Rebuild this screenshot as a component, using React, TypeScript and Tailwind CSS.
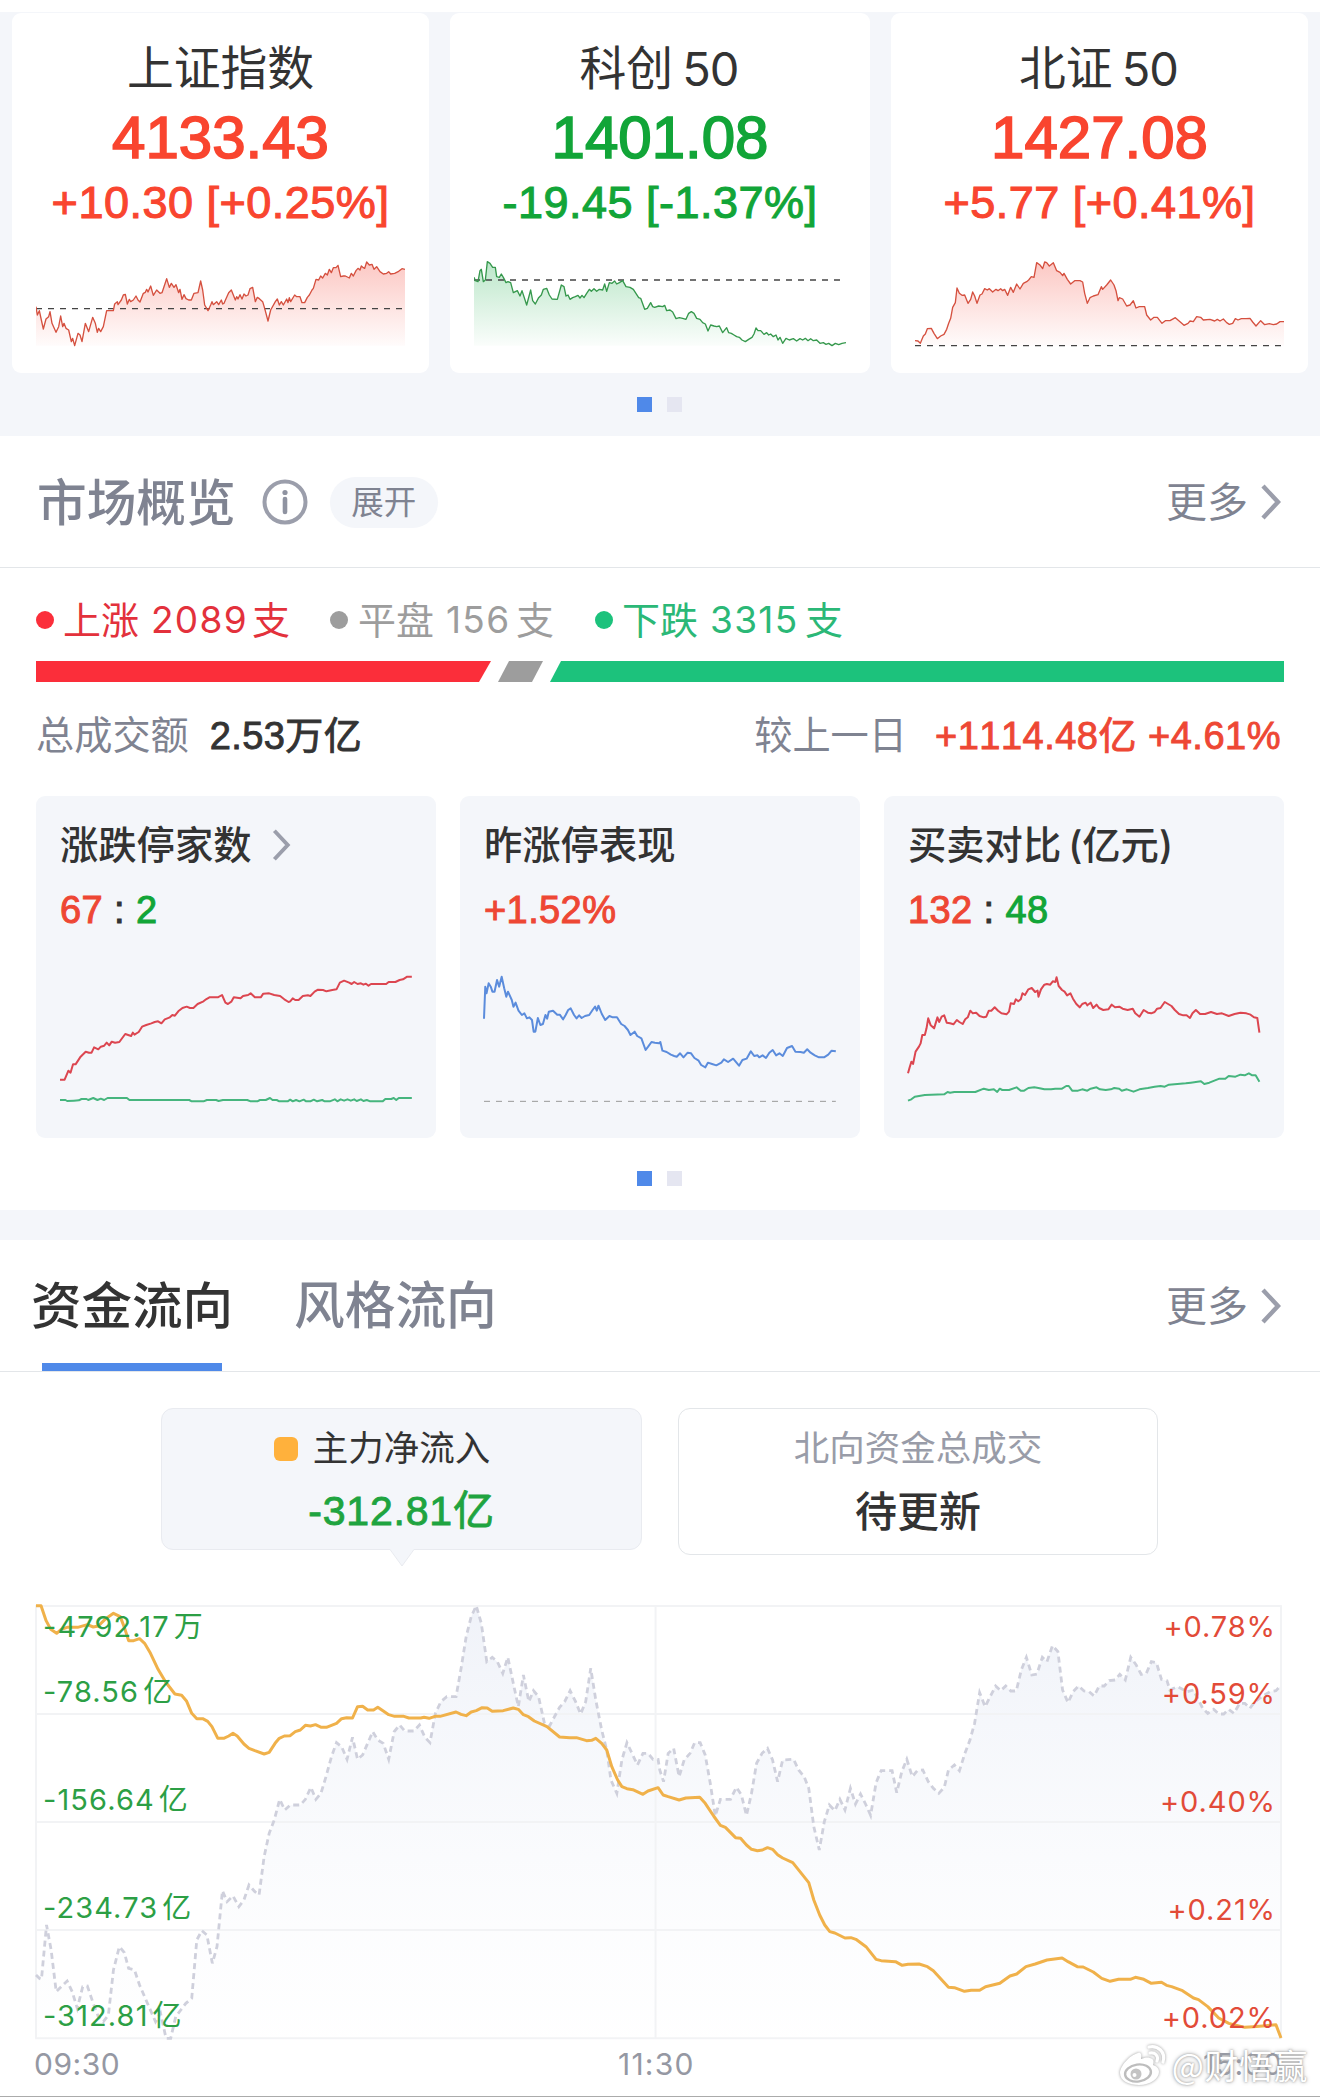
import React from 'react';

const INDEX_SH =
  '108,920 112,945 118,932 124,960 130,987 138,957 146,950 150,935 156,970 168,997 176,980 182,948 188,980 192,970 198,985 206,990 214,1025 218,1015 224,1037 234,1000 240,1005 246,1025 256,970 266,995 278,952 286,970 292,997 296,985 302,995 310,980 320,932 340,932 344,912 352,905 354,914 364,900 370,885 376,883 382,912 388,898 392,905 400,900 408,888 414,900 420,906 430,880 436,877 440,868 444,876 452,858 460,886 470,870 480,880 486,878 500,836 508,862 514,850 522,862 528,854 536,878 540,868 546,898 552,884 558,896 566,900 574,900 582,880 594,878 602,843 608,870 614,915 624,932 632,915 636,905 640,914 650,905 656,914 664,900 668,912 672,910 686,878 694,870 706,900 710,890 714,897 720,884 726,897 732,882 738,888 744,885 750,866 758,862 766,905 772,892 778,896 788,905 794,925 804,963 812,930 826,905 832,897 838,915 844,905 850,915 860,897 864,908 868,893 872,905 884,885 890,890 900,890 906,908 914,908 922,892 928,885 936,870 940,865 948,838 956,840 962,828 968,834 976,820 982,825 988,808 994,818 1000,803 1008,803 1014,796 1022,830 1030,828 1036,828 1048,834 1054,820 1060,828 1068,812 1074,805 1080,810 1084,798 1090,803 1094,805 1100,786 1108,795 1116,793 1122,808 1130,800 1140,815 1150,822 1160,820 1166,815 1172,822 1184,820 1196,814 1206,806 1215,808';
const INDEX_KC =
  '102,832 106,842 114,845 120,812 124,808 130,845 136,840 142,785 150,790 158,802 166,802 170,830 178,832 184,822 190,832 198,848 204,845 212,848 220,878 232,872 240,888 246,872 260,915 272,870 278,902 286,912 296,893 304,885 310,868 320,865 328,885 336,897 352,898 364,855 372,860 378,888 384,885 390,898 398,893 406,890 414,886 420,894 426,886 432,893 440,880 448,868 454,874 462,866 470,874 478,868 488,870 494,852 500,874 508,848 516,850 524,843 530,852 538,848 548,842 558,860 570,862 580,868 596,893 602,895 614,928 622,925 632,908 638,920 644,922 656,918 668,920 674,916 680,932 690,930 698,936 708,956 718,953 728,955 738,958 746,940 754,935 762,940 770,955 780,958 788,968 796,972 804,993 812,975 822,978 830,980 838,978 848,998 860,983 866,998 874,1000 882,1005 890,1010 898,1012 906,1020 916,1025 926,1018 936,1012 942,1002 948,984 954,992 962,992 972,1003 980,998 986,1005 992,1002 1000,1010 1008,1005 1014,1020 1020,1012 1028,1030 1038,1015 1048,1020 1060,1016 1070,1023 1080,1016 1088,1020 1096,1015 1104,1022 1112,1016 1120,1022 1130,1020 1140,1030 1150,1028 1158,1033 1166,1030 1176,1037 1186,1030 1196,1034 1206,1030 1218,1028';
const INDEX_BZ =
  '105,1022 114,1023 121,1030 130,1008 136,1002 142,986 154,985 162,1000 172,1016 182,1008 192,1003 200,988 206,970 212,955 218,922 226,908 231,864 238,880 246,886 254,885 264,910 272,898 278,876 284,888 291,910 300,885 306,882 314,866 322,870 328,866 338,876 348,868 354,872 362,866 368,872 374,868 383,886 392,862 400,877 410,852 420,867 430,850 440,845 446,840 454,830 462,832 470,788 480,795 488,806 494,786 500,788 508,798 520,788 530,812 540,817 548,827 552,820 562,838 572,852 584,842 600,842 608,846 614,880 622,910 630,893 640,888 654,884 664,860 668,868 680,855 692,840 702,855 708,872 714,902 718,893 728,897 740,918 750,915 760,902 768,924 778,920 794,920 800,945 812,960 822,952 832,952 846,970 856,962 870,962 886,953 900,965 912,976 924,970 930,963 940,965 950,950 962,952 970,960 990,958 1004,963 1012,958 1020,963 1030,957 1040,968 1048,973 1058,970 1066,956 1074,960 1084,956 1098,956 1110,955 1118,966 1128,978 1142,962 1154,974 1168,971 1180,974 1190,972 1200,965 1212,965';

const LIMIT_UP =
  '143,899 154,899 163,872 168,878 174,853 180,853 192,830 204,815 212,818 218,818 224,802 234,808 240,800 248,797 254,788 260,796 266,785 274,788 284,786 298,762 312,768 316,758 320,764 330,756 338,740 348,735 360,730 368,726 376,724 384,730 392,718 404,712 410,705 416,707 424,694 434,684 444,680 452,684 460,684 470,672 484,664 490,658 498,652 518,652 528,645 536,668 542,672 550,665 556,652 572,655 578,648 590,645 596,640 606,652 620,652 626,641 640,640 652,645 666,648 676,658 686,666 690,664 696,655 702,660 710,660 720,648 732,646 738,648 748,635 756,629 768,630 776,634 790,630 800,628 808,608 818,602 830,608 836,612 842,606 850,612 858,610 864,614 870,611 876,617 882,612 910,612 918,612 924,606 940,606 950,600 958,598 968,590 979,590';
const LIMIT_DOWN =
  '143,960 156,960 160,963 176,962 188,961 194,957 206,957 210,960 222,954 232,960 240,956 248,960 256,954 302,954 308,960 450,960 456,964 484,964 492,960 514,960 520,963 530,960 588,960 596,964 612,964 618,960 632,960 642,954 648,960 658,960 664,964 684,964 690,959 696,964 704,960 712,964 722,959 728,964 738,964 746,959 754,964 766,960 772,964 784,964 796,958 802,964 810,958 818,962 826,958 834,962 842,958 848,963 858,958 864,963 872,960 880,964 910,964 916,957 930,957 936,954 942,960 948,954 979,954';
const YESTERDAY =
  '1150,716 1153,620 1156,640 1161,610 1166,620 1170,635 1175,635 1181,600 1186,620 1192,590 1198,625 1203,650 1207,635 1216,660 1220,680 1225,668 1232,692 1240,705 1246,700 1252,715 1258,712 1264,720 1268,755 1272,755 1278,714 1284,735 1290,732 1296,705 1300,716 1304,695 1314,692 1324,704 1330,704 1338,718 1344,705 1350,690 1356,685 1364,705 1370,715 1376,706 1382,714 1390,708 1400,705 1408,690 1414,680 1418,692 1422,677 1430,702 1438,720 1448,708 1456,712 1466,712 1476,732 1484,738 1492,750 1498,765 1508,755 1514,768 1524,775 1534,810 1540,800 1548,786 1556,788 1566,790 1569,786 1574,812 1584,816 1594,824 1602,828 1608,830 1616,820 1624,832 1634,818 1642,820 1650,834 1660,842 1666,855 1676,862 1682,848 1692,852 1702,856 1714,848 1720,838 1730,846 1742,836 1750,848 1756,857 1764,840 1774,836 1784,814 1792,828 1800,826 1804,832 1812,826 1820,834 1828,818 1836,810 1844,826 1852,820 1860,828 1870,804 1882,798 1890,815 1902,816 1910,818 1918,808 1926,818 1936,826 1946,832 1958,832 1968,824 1976,812 1986,814';
const BUY =
  '590,880 594,862 598,845 602,852 608,815 616,800 620,790 624,765 630,765 634,745 638,715 644,736 652,745 660,712 664,726 670,710 676,706 682,728 690,730 698,733 706,720 712,726 720,732 726,718 732,712 738,692 744,700 752,698 760,708 770,712 776,710 782,692 788,692 796,682 804,692 812,700 824,703 830,695 834,670 842,672 846,658 852,664 858,658 862,640 868,645 876,628 884,624 892,636 898,632 900,650 906,628 914,614 920,612 928,614 934,604 940,606 943,592 948,618 956,630 962,635 968,646 976,640 982,656 990,672 998,682 1004,672 1012,668 1016,676 1024,668 1030,684 1038,674 1044,684 1054,690 1066,688 1074,674 1082,682 1092,680 1100,686 1112,690 1124,686 1130,700 1140,710 1150,690 1160,698 1168,700 1176,696 1182,686 1190,684 1200,666 1208,672 1216,678 1224,690 1234,702 1244,706 1252,706 1260,714 1266,700 1274,690 1284,702 1296,702 1310,696 1324,702 1336,700 1352,708 1366,702 1380,698 1394,700 1404,704 1412,712 1420,714 1425,758';
const SELL =
  '590,962 598,958 606,950 630,945 676,943 684,936 690,938 700,936 720,936 750,936 770,926 782,930 794,928 802,936 808,926 814,930 830,930 848,922 858,932 866,932 876,924 890,922 900,924 914,928 930,928 940,926 956,926 966,918 972,918 980,932 994,932 1004,928 1016,932 1024,926 1038,922 1046,928 1060,930 1072,928 1080,924 1092,926 1098,932 1110,928 1126,935 1140,928 1160,924 1176,920 1190,918 1200,920 1210,914 1230,912 1250,910 1262,908 1286,904 1294,912 1306,908 1318,902 1330,896 1344,896 1352,888 1368,890 1380,884 1390,886 1400,880 1408,886 1416,886 1425,905';

const FLOW =
  '86,77 98,77 110,122 121,148 135,160 146,148 160,142 185,142 208,134 222,141 234,138 250,118 270,100 286,110 296,142 306,182 318,182 332,176 344,190 358,220 376,268 394,306 416,342 432,346 444,364 456,400 468,416 482,416 494,424 504,440 518,475 532,475 544,468 554,460 564,468 580,492 592,505 606,512 628,522 640,517 654,490 664,475 676,468 690,467 702,455 714,450 726,436 738,438 750,434 764,442 776,442 800,430 812,416 824,413 838,414 850,380 862,379 874,390 888,390 898,382 912,394 924,404 938,409 960,409 972,414 1000,414 1008,412 1020,415 1034,409 1046,409 1084,396 1096,403 1108,407 1120,396 1132,392 1146,383 1158,384 1170,394 1196,392 1220,384 1232,388 1244,404 1256,410 1270,423 1300,440 1330,471 1354,473 1370,473 1394,482 1406,481 1416,475 1430,490 1442,510 1454,560 1468,600 1478,620 1490,626 1504,629 1528,643 1540,633 1564,623 1576,645 1588,650 1614,660 1630,654 1663,652 1676,670 1696,708 1712,736 1724,742 1748,773 1760,775 1774,795 1786,808 1800,812 1812,810 1824,803 1836,808 1848,824 1860,834 1884,848 1922,908 1934,960 1948,1005 1960,1035 1972,1055 1984,1059 2008,1074 2022,1073 2034,1078 2058,1100 2082,1138 2094,1142 2128,1145 2144,1156 2158,1153 2184,1152 2204,1160 2218,1172 2254,1222 2268,1223 2292,1234 2308,1231 2328,1231 2342,1220 2376,1210 2400,1188 2416,1182 2438,1160 2460,1152 2488,1140 2524,1134 2538,1145 2560,1160 2574,1161 2598,1176 2618,1195 2638,1204 2658,1198 2686,1198 2698,1192 2718,1198 2736,1210 2760,1207 2772,1216 2784,1220 2810,1232 2836,1254 2848,1259 2870,1280 2896,1314 2920,1330 2958,1342 2978,1340 3008,1337 3032,1334 3044,1374';
const TREND =
  '86,1185 94,1195 99,1198 111,1035 122,1110 134,1235 146,1220 160,1203 172,1235 184,1285 197,1220 208,1218 222,1270 234,1310 246,1325 258,1305 270,1170 284,1100 296,1118 306,1165 320,1170 332,1215 356,1285 370,1325 382,1300 395,1375 406,1375 418,1310 430,1290 442,1270 456,1255 468,1080 480,1052 492,1065 505,1150 516,1100 529,932 540,965 554,948 568,980 580,960 592,915 606,935 616,945 628,830 640,760 652,720 665,658 677,690 690,675 714,675 726,658 739,622 751,658 763,640 775,590 788,530 800,488 812,500 825,538 838,472 850,538 862,525 886,455 898,480 911,490 924,538 937,455 950,435 962,453 984,453 997,435 1010,472 1022,488 1035,400 1048,365 1062,350 1084,350 1096,265 1108,170 1120,110 1132,77 1144,130 1157,245 1170,232 1182,245 1195,280 1207,232 1220,310 1232,380 1244,285 1257,365 1268,332 1280,350 1294,430 1306,438 1320,405 1330,382 1342,365 1355,332 1368,365 1380,402 1392,365 1404,265 1416,360 1430,450 1442,510 1452,600 1466,640 1478,540 1490,488 1502,520 1515,555 1528,520 1540,520 1552,538 1564,538 1568,570 1577,605 1588,520 1601,505 1614,590 1626,540 1640,520 1651,488 1664,488 1676,525 1688,610 1700,708 1712,658 1736,658 1750,622 1762,645 1774,706 1786,640 1798,550 1811,520 1824,505 1836,540 1848,605 1860,540 1886,538 1898,570 1911,590 1922,625 1934,740 1947,810 1959,725 1971,675 1984,692 1996,658 2008,690 2021,625 2033,672 2045,642 2058,675 2069,706 2082,608 2094,572 2120,572 2131,638 2143,575 2155,538 2168,590 2180,572 2193,570 2206,605 2218,625 2231,640 2244,622 2254,570 2268,555 2280,572 2293,520 2305,480 2316,430 2328,338 2341,380 2353,350 2366,318 2378,332 2390,318 2402,333 2415,333 2427,270 2439,232 2452,285 2464,282 2477,232 2488,245 2501,197 2514,215 2525,330 2538,368 2550,335 2563,318 2576,333 2588,335 2600,348 2612,318 2624,318 2636,302 2650,300 2661,283 2674,300 2687,232 2700,255 2712,283 2724,280 2736,245 2748,248 2760,298 2773,302 2780,330 2798,320 2822,335 2836,330 2858,385 2870,400 2884,388 2896,402 2908,402 2920,388 2932,400 2946,370 2958,370 2970,385 2982,365 2998,350 3018,335 3032,332 3043,318';

type IndexCardProps = {
  name: string;
  digits?: string;
  value: string;
  change: string;
  tone: string;
  stroke: string;
  fill: string;
  id: string;
  points: string;
  x0: number;
  x1: number;
  baseline: number;
};

function IndexCard({ name, digits, value, change, tone, stroke, fill, id, points, x0, x1, baseline }: IndexCardProps) {
  return (
    <div className="flex h-[360px] flex-col items-center rounded-[9px] bg-white pt-[25px]">
      <div className="flex h-[60px] items-center text-[46.800px] leading-[60px] text-[#333333]">
        <span>{name}</span>
        {digits && <span className="ml-[9px] mr-[2px] mt-[2px] text-[47px] tracking-[-1px]">{digits}</span>}
      </div>
      <div className={`h-[80px] whitespace-nowrap font-["Liberation_Sans",sans-serif] text-[60px] leading-[80px] [font-kerning:none] [-webkit-text-stroke:1.7px_currentColor] ${tone}`}>
        {value}
      </div>
      <div className={`h-[50px] whitespace-pre font-["Liberation_Sans",sans-serif] text-[45px] leading-[50px] tracking-[0.5px] [font-kerning:none] [-webkit-text-stroke:1.1px_currentColor] ${tone}`}>
        {change}
      </div>
      <svg
        className="mt-[29px] block"
        width={(x1 - x0) / 3}
        height={93}
        viewBox={`${x0} 771 ${x1 - x0} 279`}
      >
        <defs>
          <linearGradient id={id} x1="0" y1="0" x2="0" y2="1">
            <stop offset="0" stopColor={fill} stopOpacity="0.3" />
            <stop offset="1" stopColor={fill} stopOpacity="0.02" />
          </linearGradient>
        </defs>
        <polygon points={`${x0},1037 ${points} ${x1},1037`} fill={`url(#${id})`} />
        <line x1={x0} x2={x1} y1={baseline} y2={baseline} stroke="#444" strokeWidth="4" strokeDasharray="18 18" />
        <polyline points={points} fill="none" stroke={stroke} strokeWidth="4" strokeLinejoin="round" />
      </svg>
    </div>
  );
}

function Dots() {
  return (
    <div className="flex justify-center gap-[15px] pr-[2px]">
      <span className="size-[15px] bg-[#4f89e9]" />
      <span className="size-[15px] bg-[#e5e6f1]" />
    </div>
  );
}

function Chevron({ w = 20, h = 36 }: { w?: number; h?: number }) {
  return (
    <svg width={w} height={h} viewBox="0 0 20 36" className="block shrink-0" fill="none" stroke="#9b9eab" strokeWidth="4.4">
      <path d="M2 2 L17 18 L2 34" strokeLinejoin="miter" />
    </svg>
  );
}

function More() {
  return (
    <div className="flex items-center">
      <span className="text-[41px] leading-[50px] text-[#7f8391]">更多</span>
      <span className="ml-[13px]">
        <Chevron />
      </span>
    </div>
  );
}

function StatCard({ title, chevron, value, children }: { title: React.ReactNode; chevron?: boolean; value: React.ReactNode; children: React.ReactNode }) {
  return (
    <div className="h-[342px] rounded-[9px] bg-[#f4f6fa] pl-[24px] pt-[24px]">
      <div className="flex h-[50px] items-center">
        <span className="whitespace-nowrap text-[38.300px] font-medium leading-[50px] text-[#333333]">{title}</span>
        {chevron && (
          <span className="ml-[20px]">
            <Chevron w={19} h={32} />
          </span>
        )}
      </div>
      <div className='mt-[15px] h-[50px] whitespace-pre font-["Liberation_Sans",sans-serif] text-[38px] leading-[50px] tracking-[0.4px] [font-kerning:none] [-webkit-text-stroke:1px_currentColor]'>
        {value}
      </div>
      {children}
    </div>
  );
}

function MiniChart({ x0, children }: { x0: number; children: React.ReactNode }) {
  return (
    <svg className="mt-[70px] block" width={352} height={100} viewBox={`${x0} 675 836.4 300`} preserveAspectRatio="none" overflow="visible">
      {children}
    </svg>
  );
}

function Line({ points, color, width = 2 }: { points: string; color: string; width?: number }) {
  return (
    <polyline points={points} fill="none" stroke={color} strokeWidth={width} strokeLinejoin="round" vectorEffect="non-scaling-stroke" />
  );
}

const LEFT_LABELS = [
  ['-4792.17', '万'],
  ['-78.56', '亿'],
  ['-156.64', '亿'],
  ['-234.73', '亿'],
  ['-312.81', '亿'],
];
const RIGHT_LABELS = ['+0.78%', '+0.59%', '+0.40%', '+0.21%', '+0.02%'];
const LEFT_TOPS = ['top-[2px]', 'top-[67px]', 'top-[175px]', 'top-[283px]', 'top-[391px]'];
const RIGHT_TOPS = ['top-[2px]', 'top-[69px]', 'top-[177px]', 'top-[285px]', 'top-[393px]'];

function FlowChart() {
  return (
    <div className="relative ml-[36px] h-[434px] w-[1245px]">
      <svg className="block" width={1245} height={434} viewBox="86 75 2958 1302" preserveAspectRatio="none" overflow="visible">
        <defs>
          <linearGradient id="trend" x1="0" y1="0" x2="0" y2="1">
            <stop offset="0" stopColor="#eef1f8" stopOpacity="0.9" />
            <stop offset="1" stopColor="#f6f8fc" stopOpacity="0.05" />
          </linearGradient>
        </defs>
        <polygon points={`86,1375 ${TREND} 3043,1375`} fill="url(#trend)" />
        {[78, 402, 726, 1050, 1375].map((y) => (
          <line key={y} x1="84" x2="3046" y1={y} y2={y} stroke="#f2f3f5" strokeWidth="2" vectorEffect="non-scaling-stroke" />
        ))}
        {[86, 1558, 3044].map((x) => (
          <line key={x} x1={x} x2={x} y1="78" y2="1375" stroke="#f2f3f5" strokeWidth="2" vectorEffect="non-scaling-stroke" />
        ))}
        <polyline points={TREND} fill="none" stroke="#cfd0dc" strokeWidth="2.8" strokeDasharray="6 4" vectorEffect="non-scaling-stroke" />
        <Line points={FLOW} color="#f0b14a" width={3} />
      </svg>
      {LEFT_LABELS.map(([n, u], i) => (
        <div key={n} className={`absolute left-[7px] flex h-[40px] items-center text-[29px] leading-[40px] text-[#2c9f45] ${LEFT_TOPS[i]}`}>
          <span className="tracking-[1.1px]">{n}</span>
          <span className="ml-[4px]">{u}</span>
        </div>
      ))}
      {RIGHT_LABELS.map((n, i) => (
        <div key={n} className={`absolute right-[5px] h-[40px] text-[29px] leading-[40px] tracking-[0.9px] text-[#e24b38] ${RIGHT_TOPS[i]}`}>
          {n}
        </div>
      ))}
    </div>
  );
}

function Watermark() {
  return (
    <div className="absolute right-[12px] top-[4px] flex items-center">
      <svg width="50" height="44" viewBox="0 0 50 44" className="mr-[4px] block [filter:drop-shadow(0_0_1.5px_#999)]" fill="none">
        <path
          d="M20 10c-8 2-18 13-18 20 0 8 9 12 19 12 12 0 20-7 20-13 0-4-3-6-6-7 1-3 1-6-3-7-3-1-6 0-9 1 1-4 0-7-3-6z"
          fill="#ffffff"
        />
        <ellipse cx="20" cy="30" rx="13" ry="8.500" fill="#fff" stroke="#bdbdbd" strokeWidth="2.400" transform="rotate(-8 20 30)" />
        <circle cx="18" cy="31" r="5.500" fill="#c4c4c4" />
        <circle cx="16.500" cy="32" r="2" fill="#fff" />
        <path d="M31 4c9-2 17 5 14 15M32 10c5-1 9 3 7 8" stroke="#ffffff" strokeWidth="3.200" strokeLinecap="round" />
      </svg>
      <span className='whitespace-nowrap font-["Noto_Sans_CJK_SC",sans-serif] text-[34px] leading-[44px] text-white [text-shadow:0_0_2px_#999,0_0_4px_#aaa]'>
        @财悟赢
      </span>
    </div>
  );
}

export default function App() {
  return (
    <div className='h-[2097px] w-[1320px] overflow-hidden bg-white pt-[12px] font-["Inter","Noto_Sans_CJK_SC",sans-serif]'>
      <section className="h-[424px] bg-[#f4f6fa] px-[12px] pt-px">
        <div className="grid grid-cols-[417px_420px_417px] gap-[21px]">
          <IndexCard name="上证指数" value="4133.43" change="+10.30 [+0.25%]" tone="text-[#f9452f]" stroke="#d5503f" fill="#f5483a" id="g1" points={INDEX_SH} x0={108} x1={1215} baseline={926} />
          <IndexCard name="科创" digits="50" value="1401.08" change="-19.45 [-1.37%]" tone="text-[#12a538]" stroke="#35984c" fill="#1fae4c" id="g2" points={INDEX_KC} x0={102} x1={1218} baseline={840} />
          <IndexCard name="北证" digits="50" value="1427.08" change="+5.77 [+0.41%]" tone="text-[#f9452f]" stroke="#d5503f" fill="#f5483a" id="g3" points={INDEX_BZ} x0={105} x1={1212} baseline={1037} />
        </div>
        <div className="mt-[24px]">
          <Dots />
        </div>
      </section>

      <section className="h-[774px]">
        <header className="flex h-[132px] items-center border-b border-[#e3e6e9] pl-[37px] pr-[39px]">
          <h2 className="mt-[2px] text-[49.700px] font-medium leading-[60px] text-[#7f8391]">市场概览</h2>
          <svg className="ml-[26px] block" width="46" height="46" viewBox="0 0 46 46">
            <circle cx="23" cy="23" r="20.500" fill="none" stroke="#9b9eab" strokeWidth="4" />
            <circle cx="23" cy="13.500" r="2.600" fill="#8f93a1" />
            <path d="M23 20v13" stroke="#8f93a1" strokeWidth="4.600" strokeLinecap="round" />
          </svg>
          <span className="ml-[22px] mt-px flex h-[51px] w-[108px] items-center justify-center rounded-full bg-[#f4f6fa] text-[32.500px] leading-[51px] text-[#7f8391]">
            展开
          </span>
          <span className="ml-auto">
            <More />
          </span>
        </header>

        <div className="flex h-[56px] w-full items-center pl-[36px] pt-[48px] text-[38px] leading-[56px]">
          <div className="flex w-[294px] items-center text-[#e3313c]">
            <span className="size-[18px] rounded-full bg-[#fb2e3a]" />
            <span className="ml-[9px] w-[88px]">上涨</span>
            <span className="w-[101px] text-[37px] tracking-[1.3px]">2089</span>
            <span>支</span>
          </div>
          <div className="flex w-[265px] items-center text-[#9d9d9d]">
            <span className="size-[18px] rounded-full bg-[#9d9d9d]" />
            <span className="ml-[10px] w-[88px]">平盘</span>
            <span className="w-[70px] text-[37px] tracking-[1.3px]">156</span>
            <span>支</span>
          </div>
          <div className="flex items-center text-[#2bb877]">
            <span className="size-[18px] rounded-full bg-[#1cc27c]" />
            <span className="ml-[9px] w-[88px]">下跌</span>
            <span className="w-[95px] text-[37px] tracking-[1.3px]">3315</span>
            <span>支</span>
          </div>
        </div>

        <svg className="ml-[36px] mt-[37px] block" width="1248" height="21" viewBox="36 0 1248 21">
          <path d="M36 0H491L479 21H36z" fill="#fb2e3a" />
          <path d="M509 0H543L532 21H498z" fill="#9d9d9d" />
          <path d="M561 0H1284V21H550z" fill="#1cc27c" />
        </svg>

        <div className="mt-[28px] flex h-[50px] items-center pl-[36px] pr-[39px] text-[38.200px] leading-[50px]">
          <span className="text-[#7f8391]">总成交额</span>
          <span className='ml-[21px] mt-[2px] whitespace-nowrap font-["Liberation_Sans","Noto_Sans_CJK_SC",sans-serif] text-[38px] tracking-[0.4px] text-[#333333] [font-kerning:none] [-webkit-text-stroke:0.9px_currentColor]'>
            2.53万亿
          </span>
          <span className="ml-auto text-[#7f8391]">较上一日</span>
          <span className='ml-[28px] mt-[2px] whitespace-pre font-["Liberation_Sans","Noto_Sans_CJK_SC",sans-serif] text-[38px] tracking-[0.5px] text-[#ee4734] [font-kerning:none] [-webkit-text-stroke:0.9px_currentColor]'>
            +1114.48亿 +4.61%
          </span>
        </div>

        <div className="mt-[36px] grid grid-cols-[400px_400px_400px] gap-[24px] pl-[36px]">
          <StatCard
            title="涨跌停家数"
            chevron
            value={
              <>
                <span className="text-[#ee4734]">67</span>
                <span className="text-[#333333]"> : </span>
                <span className="text-[#12a538]">2</span>
              </>
            }
          >
            <MiniChart x0={143}>
              <Line points={LIMIT_UP} color="#dc4650" />
              <Line points={LIMIT_DOWN} color="#46b57e" />
            </MiniChart>
          </StatCard>
          <StatCard title="昨涨停表现" value={<span className="text-[#ee4734]">+1.52%</span>}>
            <MiniChart x0={1150}>
              <line x1="1150" x2="1986" y1="964" y2="964" stroke="#999" strokeWidth="1" strokeDasharray="6 6" vectorEffect="non-scaling-stroke" />
              <Line points={YESTERDAY} color="#5b8cdc" />
            </MiniChart>
          </StatCard>
          <StatCard
            title={
              <>
                买卖对比<span className="ml-[7px]">(亿元)</span>
              </>
            }
            value={
              <>
                <span className="text-[#ee4734]">132</span>
                <span className="text-[#333333]"> : </span>
                <span className="text-[#12a538]">48</span>
              </>
            }
          >
            <MiniChart x0={590}>
              <Line points={BUY} color="#dc4650" />
              <Line points={SELL} color="#46b57e" />
            </MiniChart>
          </StatCard>
        </div>
        <div className="mt-[33px]">
          <Dots />
        </div>
      </section>

      <div className="h-[30px] bg-[#f4f6fa]" />

      <section className="h-[857px]">
        <header className="flex h-[132px] items-center border-b border-[#e3e6e9] pl-[31px] pr-[39px]">
          <div className="relative flex h-[131px] items-center text-[50.500px] font-medium text-[#333333]">
            资金流向
            <span className="absolute bottom-0 left-[11px] h-[8px] w-[180px] bg-[#4f89e9]" />
          </div>
          <div className="ml-[61px] text-[50.700px] font-medium leading-[60px] text-[#7f8391]">风格流向</div>
          <span className="ml-auto">
            <More />
          </span>
        </header>

        <div className="flex h-[186px] gap-[36px] pl-[161px] pt-[36px]">
          <div className="relative flex h-[142px] w-[481px] flex-col items-center rounded-[12px] border border-[#e9ebf0] bg-[#f4f6fa] pt-[15px]">
            <div className="flex h-[50px] items-center pr-[39px]">
              <span className="size-[24px] rounded-[6px] bg-[#ffb13c]" />
              <span className="ml-[15px] text-[35.500px] leading-[50px] text-[#333333]">主力净流入</span>
            </div>
            <div className='mt-[12px] h-[50px] whitespace-nowrap font-["Liberation_Sans","Noto_Sans_CJK_SC",sans-serif] text-[41px] leading-[50px] tracking-[0.8px] text-[#1fa440] [font-kerning:none] [-webkit-text-stroke:0.9px_currentColor]'>
              -312.81亿
            </div>
            <svg className="absolute left-[227px] top-[139px]" width="26" height="20" viewBox="0 0 26 20">
              <path d="M0 0H26L13 18z" fill="#f4f6fa" />
              <path d="M1 1.500L13 18L25 1.500" fill="none" stroke="#e9ebf0" />
            </svg>
          </div>
          <div className="flex h-[147px] w-[480px] flex-col items-center rounded-[12px] border border-[#e3e6e9] pt-[15px]">
            <div className="h-[50px] text-[35.500px] leading-[50px] text-[#999ca8]">北向资金总成交</div>
            <div className="mt-[13px] h-[50px] text-[42px] font-medium leading-[50px] text-[#333333]">待更新</div>
          </div>
        </div>

        <div className="pt-[47px]">
          <FlowChart />
        </div>

        <div className="relative flex h-[58px] border-b border-[#ababab] pl-[34px] pt-[5px] text-[30px] leading-[40px] tracking-[0.5px] text-[#9598a3]">
          <span className="w-[584px]">09:30</span>
          <span className="w-[585px] tracking-[1.2px]">11:30</span>
          <span>15:00</span>
          <Watermark />
        </div>
      </section>
    </div>
  );
}
